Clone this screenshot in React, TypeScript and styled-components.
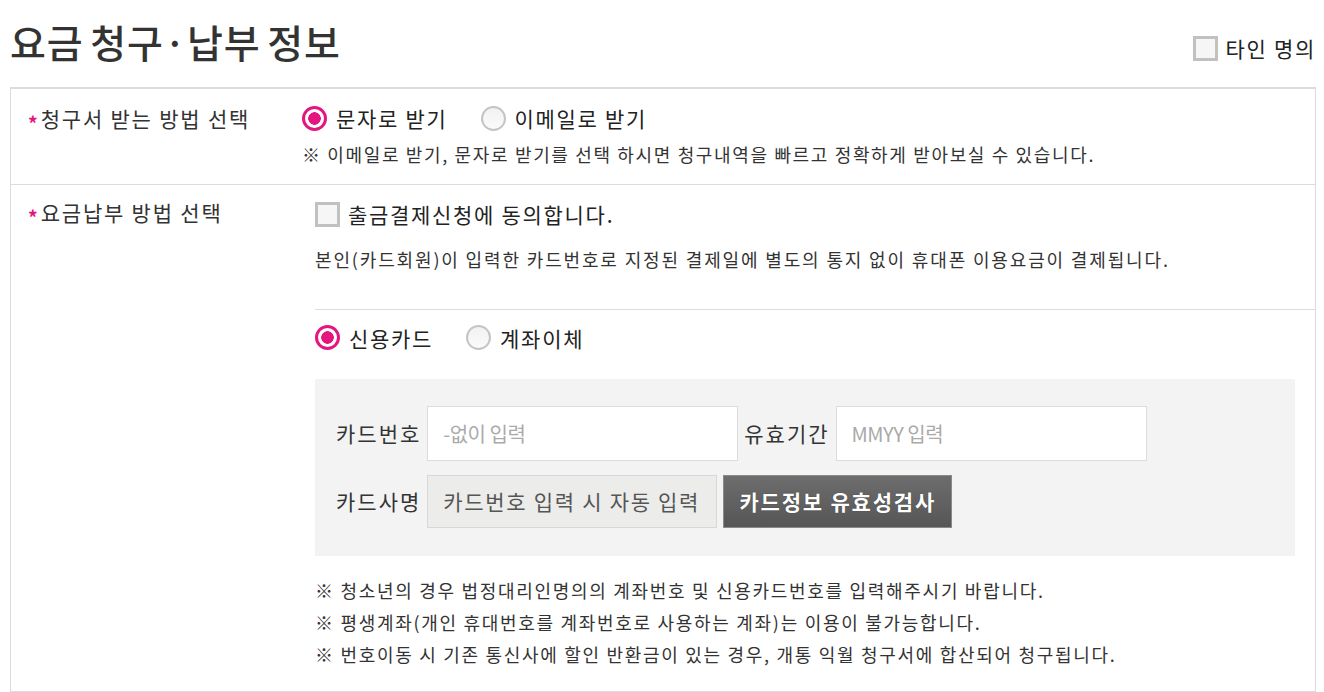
import React from "react";
import styled, { createGlobalStyle } from "styled-components";

const FONT = `"Noto Sans CJK KR", "Noto Sans", sans-serif`;
const PINK = "#e5157f";

const GlobalStyle = createGlobalStyle`
  html, body { margin: 0; padding: 0; background: #fff; }
  body { font-family: ${FONT}; color: #222; }
  * { box-sizing: border-box; }
`;

const Page = styled.div`
  width: 1324px;
  padding: 0 8px 0 10px;
`;

const Header = styled.div`
  display: flex;
  justify-content: space-between;
  align-items: flex-start;
  height: 87px;
`;

const Title = styled.h1`
  margin: 17px 0 0 0;
  font-size: 39px;
  line-height: 48px;
  font-weight: 500;
  letter-spacing: 0.9px;
  word-spacing: -3px;
  color: #333;
`;

const CheckLabel = styled.label<{ $top?: number }>`
  display: inline-flex;
  align-items: center;
  gap: 8px;
  margin-top: ${(p) => p.$top ?? 0}px;
  font-size: 21px;
  letter-spacing: 1.7px;
  line-height: 26px;
  color: #222;
`;

const Box = styled.span`
  display: inline-block;
  width: 25px;
  height: 25px;
  border: 3px solid #c1c1c1;
  background: #f6f6f6;
`;

const Table = styled.div`
  border: 1px solid #dcdcdc;
  border-top-width: 2px;
`;

const Row = styled.div<{ $last?: boolean }>`
  display: grid;
  grid-template-columns: 291px 1fr;
  border-bottom: ${(p) => (p.$last ? "none" : "1px solid #dcdcdc")};
`;

const Label = styled.div<{ $top: number }>`
  padding: ${(p) => p.$top}px 0 0 17px;
  font-size: 21px;
  letter-spacing: 1.8px;
  line-height: 26px;
  color: #333;
`;

const Star = styled.span`
  color: ${PINK};
  font-size: 19px;
  font-weight: 700;
  letter-spacing: 0;
  margin-right: 3px;
  vertical-align: -4px;
`;

const Content = styled.div<{ $indent: number; $top: number; $bottom: number }>`
  padding: ${(p) => p.$top}px 0 ${(p) => p.$bottom}px ${(p) => p.$indent}px;
`;

const RadioGroup = styled.div<{ $gap: number }>`
  display: flex;
  align-items: center;
  gap: ${(p) => p.$gap}px;
  height: 26px;
`;

const RadioLabel = styled.label`
  display: inline-flex;
  align-items: center;
  gap: 9px;
  font-size: 21px;
  letter-spacing: 1.7px;
  line-height: 26px;
  color: #222;
`;

const RadioMark = styled.span<{ $on?: boolean }>`
  display: inline-block;
  flex: none;
  width: 25px;
  height: 25px;
  border-radius: 50%;
  border: ${(p) => (p.$on ? `3px solid ${PINK}` : "2px solid #c4c4c4")};
  background: ${(p) =>
    p.$on
      ? `radial-gradient(circle, ${PINK} 0 6px, #fff 6.5px)`
      : "linear-gradient(#f2f2f2, #fafafa)"};
`;

const Note = styled.p<{ $top: number; $ls?: number }>`
  margin: ${(p) => p.$top}px 0 0 0;
  font-size: 18px;
  letter-spacing: ${(p) => p.$ls ?? 1.65}px;
  line-height: 22px;
  color: #333;
`;

const Divider = styled.div`
  height: 1px;
  background: #dcdcdc;
  margin: 39px 0 15px 0;
`;

const Sub = styled.div`
  padding-right: 20px;
`;

const CardPanel = styled.div`
  margin-top: 28px;
  background: #f3f3f3;
  padding: 27px 0 28px 21px;
  display: flex;
  flex-direction: column;
  gap: 14px;
`;

const FieldRow = styled.div`
  display: flex;
  align-items: center;
`;

const FieldLabel = styled.span<{ $ml?: number }>`
  font-size: 21px;
  letter-spacing: 2px;
  color: #333;
  margin: 0 6px 0 ${(p) => p.$ml ?? 0}px;
  white-space: nowrap;
`;

const Input = styled.input<{ $w: number }>`
  width: ${(p) => p.$w}px;
  height: 55px;
  border: 1px solid #dcdcdc;
  background: #fff;
  padding: 0 15px;
  font-family: ${FONT};
  font-size: 20px;
  letter-spacing: -0.5px;
  outline: none;
  &::placeholder { color: #aaa; }
`;

const ReadOnly = styled.div`
  width: 290px;
  height: 53px;
  border: 1px solid #d8d8d8;
  background: #ececea;
  display: flex;
  align-items: center;
  padding-left: 15px;
  font-size: 21px;
  letter-spacing: 1.7px;
  color: #555;
  white-space: nowrap;
`;

const CheckButton = styled.button`
  margin-left: 6px;
  width: 229px;
  height: 53px;
  padding: 0;
  border: 1px solid #8a8a8a;
  background: linear-gradient(#6d6d6d, #565656);
  color: #fff;
  font-family: ${FONT};
  font-size: 21px;
  letter-spacing: 1.8px;
  font-weight: 700;
  text-shadow: 0 0 1px rgba(0, 0, 0, 0.5);
  cursor: pointer;
`;

const Notes = styled.ul`
  list-style: none;
  margin: 18px 0 0 0;
  padding: 0;
`;

const NoteItem = styled.li`
  font-size: 18px;
  letter-spacing: 1.7px;
  line-height: 32px;
  color: #333;
`;

export default function App() {
  return (
    <>
      <GlobalStyle />
      <Page>
        <Header>
          <Title>요금 청구·납부 정보</Title>
          <CheckLabel $top={35}>
            <Box />
            타인 명의
          </CheckLabel>
        </Header>
        <Table>
          <Row>
            <Label $top={16}>
              <Star>*</Star>청구서 받는 방법 선택
            </Label>
            <Content $indent={0} $top={16} $bottom={19}>
              <RadioGroup $gap={33}>
                <RadioLabel>
                  <RadioMark $on />
                  문자로 받기
                </RadioLabel>
                <RadioLabel>
                  <RadioMark />
                  이메일로 받기
                </RadioLabel>
              </RadioGroup>
              <Note $top={12}>
                ※ 이메일로 받기, 문자로 받기를 선택 하시면 청구내역을 빠르고 정확하게 받아보실 수 있습니다.
              </Note>
            </Content>
          </Row>
          <Row $last>
            <Label $top={14}>
              <Star>*</Star>요금납부 방법 선택
            </Label>
            <Content $indent={13} $top={16} $bottom={21}>
              <CheckLabel>
                <Box />
                출금결제신청에 동의합니다.
              </CheckLabel>
              <Note $top={16} $ls={1.85}>
                본인(카드회원)이 입력한 카드번호로 지정된 결제일에 별도의 통지 없이 휴대폰 이용요금이 결제됩니다.
              </Note>
              <Divider />
              <Sub>
                <RadioGroup $gap={33}>
                  <RadioLabel>
                    <RadioMark $on />
                    신용카드
                  </RadioLabel>
                  <RadioLabel>
                    <RadioMark />
                    계좌이체
                  </RadioLabel>
                </RadioGroup>
                <CardPanel>
                  <FieldRow>
                    <FieldLabel>카드번호</FieldLabel>
                    <Input $w={311} placeholder="-없이 입력" />
                    <FieldLabel $ml={6}>유효기간</FieldLabel>
                    <Input $w={311} placeholder="MMYY 입력" />
                  </FieldRow>
                  <FieldRow>
                    <FieldLabel>카드사명</FieldLabel>
                    <ReadOnly>카드번호 입력 시 자동 입력</ReadOnly>
                    <CheckButton type="button">카드정보 유효성검사</CheckButton>
                  </FieldRow>
                </CardPanel>
                <Notes>
                  <NoteItem>※ 청소년의 경우 법정대리인명의의 계좌번호 및 신용카드번호를 입력해주시기 바랍니다.</NoteItem>
                  <NoteItem>※ 평생계좌(개인 휴대번호를 계좌번호로 사용하는 계좌)는 이용이 불가능합니다.</NoteItem>
                  <NoteItem>※ 번호이동 시 기존 통신사에 할인 반환금이 있는 경우, 개통 익월 청구서에 합산되어 청구됩니다.</NoteItem>
                </Notes>
              </Sub>
            </Content>
          </Row>
        </Table>
      </Page>
    </>
  );
}
